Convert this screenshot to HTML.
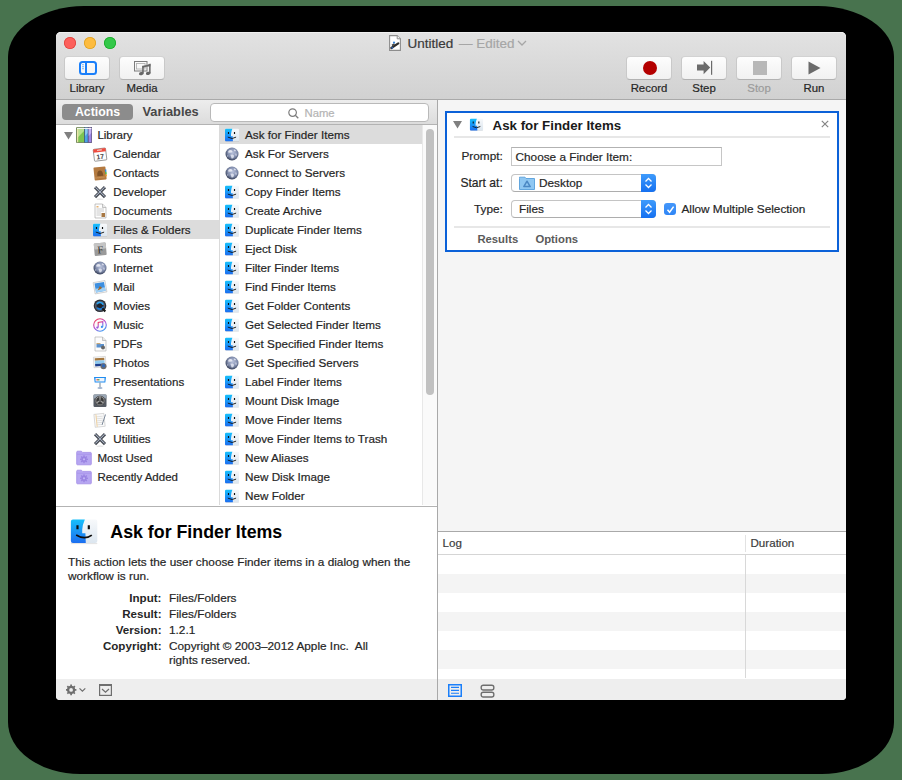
<!DOCTYPE html>
<html><head><meta charset="utf-8">
<style>
html,body{margin:0;padding:0;}
body{width:902px;height:780px;overflow:hidden;background:#48734e;position:relative;font-family:"Liberation Sans",sans-serif;color:#262626;}
.a{position:absolute;}
.t{position:absolute;white-space:pre;-webkit-text-stroke:0.2px currentColor;}
</style></head>
<body>

<svg width="0" height="0" style="position:absolute"><defs><symbol id="i-finder" viewBox="0 0 16 16"><linearGradient id="fb" x1="0" y1="0" x2="0" y2="1"><stop offset="0" stop-color="#17c0fb"/><stop offset="1" stop-color="#1c6ef0"/></linearGradient>
<linearGradient id="fw" x1="0" y1="0" x2="0" y2="1"><stop offset="0" stop-color="#f7f9fb"/><stop offset="1" stop-color="#dce6ef"/></linearGradient>
<rect x="1" y="1.8" width="14" height="12.5" rx="1.1" fill="url(#fw)"/>
<path d="M2.1 1.8H8.4Q7.2 4.4 7 7.3V9.2H8.7L8.9 14.3H2.1Q1 14.3 1 13.2V2.9Q1 1.8 2.1 1.8Z" fill="url(#fb)"/>
<path d="M4.5 4.9V7M10.5 4.9V7" stroke="#0d0d0d" stroke-width="1.15"/>
<path d="M3.8 10.1Q8.4 12.9 12.1 10.1" fill="none" stroke="#0d0d0d" stroke-width="0.9"/>
<rect x="1" y="14.3" width="14" height="0.6" fill="#000" opacity="0.1"/></symbol><symbol id="i-globe" viewBox="0 0 16 16"><radialGradient id="gl" cx="0.55" cy="0.4" r="0.62"><stop offset="0" stop-color="#b9c2dc"/><stop offset="0.6" stop-color="#7f8bab"/><stop offset="1" stop-color="#2f3850"/></radialGradient>
<circle cx="8" cy="8" r="6.5" fill="url(#gl)"/>
<path d="M4.2 5.2Q5.5 3.6 7.6 4.3L8.6 5.6L7.2 6.8L5.6 6.4L4.8 7.6Z" fill="#eef0f8" opacity="0.85"/>
<path d="M9.8 3.2L12 4.2L11.4 5.6L10 5Z" fill="#e6e9f4" opacity="0.8"/>
<path d="M6.4 8.8L8.6 8.4L10.2 9.8L9.2 12.2L7.6 12.6L7 10.6Z" fill="#e8ebf5" opacity="0.8"/>
<path d="M11 7.5L12.8 7.8L12.6 10L11.4 9.4Z" fill="#d8dcee" opacity="0.7"/>
<circle cx="3.6" cy="10" r="0.8" fill="#dfe3f0" opacity="0.6"/></symbol><symbol id="i-library" viewBox="0 0 16 16"><rect x="0.4" y="0.6" width="8.2" height="15" rx="0.4" fill="#7dc450" stroke="#56633f" stroke-width="0.7"/>
<path d="M1.2 1.2H8.1V4L1.2 11Z" fill="#b8e08e"/>
<rect x="1.1" y="1.2" width="1.1" height="14" fill="#f2e6b0"/>
<rect x="8.6" y="0.6" width="3.6" height="15" fill="#4aa3e8" stroke="#3d5670" stroke-width="0.7"/>
<path d="M9.1 1.2H11.8V6L9.1 9Z" fill="#8cc8f2"/>
<rect x="12.2" y="0.6" width="3.5" height="15" fill="#9c85e6" stroke="#4e4470" stroke-width="0.7"/>
<path d="M12.7 1.2H15.2V6L12.7 9Z" fill="#c2b2f2"/>
<rect x="1" y="0.9" width="14.4" height="1.1" fill="#fafafa" opacity="0.9"/></symbol><symbol id="i-calendar" viewBox="0 0 16 16"><g transform="rotate(-7 8 8.5)"><rect x="1.8" y="2.6" width="12.4" height="12" rx="0.8" fill="#fdfdfd" stroke="#777" stroke-width="0.7"/>
<rect x="1.8" y="2.6" width="12.4" height="3.4" fill="#ee4b3e"/><rect x="5.5" y="3.4" width="5" height="1.2" rx="0.5" fill="#f9d6d2"/>
<text x="8" y="13" font-size="6.8" font-weight="bold" font-family="Liberation Sans" text-anchor="middle" fill="#444">17</text></g></symbol><symbol id="i-contacts" viewBox="0 0 16 16"><g transform="rotate(-6 8 8)"><rect x="2" y="2" width="12" height="13" rx="0.8" fill="#b47a40"/>
<rect x="13.2" y="5" width="1.4" height="2.5" fill="#3a8de0"/><rect x="13.2" y="7.5" width="1.4" height="2.5" fill="#4bb84b"/><rect x="13.2" y="10" width="1.4" height="2" fill="#f0a030"/>
<path d="M5 11Q5 5.5 8 5.5T11 11Z" fill="#7f5228"/><path d="M3 12.5H13" stroke="#d7a46a" stroke-width="1" stroke-dasharray="1 1"/></g></symbol><symbol id="i-developer" viewBox="0 0 16 16"><path d="M3 3.2L13 13.2M13 3.2L3 13.2" stroke="#4f535b" stroke-width="3.2"/>
<path d="M3.4 3.2L12.6 12.4M12.6 3.2L3.4 12.4" stroke="#c4d0e6" stroke-width="0.9"/>
<ellipse cx="8" cy="15.2" rx="3.5" ry="0.6" fill="#000" opacity="0.12"/></symbol><symbol id="i-documents" viewBox="0 0 16 16"><path d="M3 1H10.5L14 4.5V15H3Z" fill="#fdfdfd" stroke="#a0a0a0" stroke-width="0.6"/>
<path d="M10.5 1V4.5H14" fill="#e8e8e8" stroke="#a0a0a0" stroke-width="0.6"/>
<path d="M4.5 6H12M4.5 8H12M4.5 10H9M4.5 12H9" stroke="#b5b5b5" stroke-width="0.7"/>
<rect x="9.5" y="10" width="3.5" height="4" fill="#a87843"/><rect x="4.5" y="3" width="2" height="1.5" fill="#e6b170"/></symbol><symbol id="i-fonts" viewBox="0 0 16 16"><g transform="rotate(-5 8 8)"><rect x="2.2" y="2" width="12" height="12.5" rx="1" fill="#9a9a9a"/>
<rect x="2.2" y="2" width="12" height="6" rx="1" fill="#c4c4c4"/>
<text x="8.3" y="12.3" font-size="10.5" font-family="Liberation Serif" text-anchor="middle" fill="#2e2e2e">F</text></g></symbol><symbol id="i-mail" viewBox="0 0 16 16"><g transform="rotate(-10 8 8)"><rect x="2" y="2.5" width="12" height="11.5" fill="#f4f4f4" stroke="#b0b0b0" stroke-width="0.5"/>
<rect x="3.2" y="3.7" width="9.6" height="9" fill="#3d8fe0"/><rect x="3.2" y="9" width="9.6" height="3.7" fill="#9fd0f6"/>
<path d="M5 11L8 7L10 9L8.5 10Z" fill="#a06a30"/></g></symbol><symbol id="i-movies" viewBox="0 0 16 16"><circle cx="8" cy="7.8" r="6.3" fill="#2c3038"/><circle cx="8" cy="7.8" r="5.1" fill="#515a6a"/>
<circle cx="8" cy="7.8" r="3.4" fill="#1f2530"/><path d="M5 6.2A3.4 3.4 0 0 1 11.2 6.8" fill="none" stroke="#2aa4f4" stroke-width="1.7"/><path d="M11.3 8.6A3.4 3.4 0 0 1 5.2 9.6" fill="none" stroke="#1a7fe0" stroke-width="1.7"/>
<path d="M10.3 10.3L13.3 13.6" stroke="#1a1a1a" stroke-width="2.2"/></symbol><symbol id="i-music" viewBox="0 0 16 16"><circle cx="8" cy="8" r="6.3" fill="#fbfbfb" stroke="url(#mr)" stroke-width="1.1"/>
<linearGradient id="mr" x1="0.2" y1="0" x2="0.8" y2="1"><stop offset="0" stop-color="#f43f56"/><stop offset="0.5" stop-color="#b04ad8"/><stop offset="1" stop-color="#2ea2f5"/></linearGradient>
<path d="M6.2 10.5V5.5L10.8 4.6V9.8" fill="none" stroke="url(#mr)" stroke-width="1.1"/>
<circle cx="5.3" cy="10.6" r="1.1" fill="#9c5ad8"/><circle cx="9.9" cy="9.9" r="1.1" fill="#3c8ff0"/></symbol><symbol id="i-pdfs" viewBox="0 0 16 16"><path d="M3 1H10.5L14 4.5V15H3Z" fill="#fdfdfd" stroke="#a8a8a8" stroke-width="0.6"/>
<path d="M10.5 1V4.5H14" fill="#e8e8e8" stroke="#a8a8a8" stroke-width="0.6"/>
<rect x="4.5" y="8" width="7.5" height="3.5" fill="#5b92d0"/><rect x="4.5" y="7" width="4" height="1.2" fill="#c8a878"/>
<circle cx="11" cy="11.5" r="2" fill="#666"/></symbol><symbol id="i-photos" viewBox="0 0 16 16"><g transform="rotate(-4 8 8)"><rect x="1.8" y="1.8" width="12" height="10.5" fill="#fdfdfd" stroke="#b8b8b8" stroke-width="0.5"/>
<rect x="3" y="3" width="9.6" height="2.5" fill="#a57840"/><rect x="3" y="5.5" width="9.6" height="3.2" fill="#8fcaf0"/><rect x="3" y="8.7" width="9.6" height="2.5" fill="#1d3f8e"/></g>
<circle cx="11.5" cy="11.2" r="3" fill="#6d6d6d"/><circle cx="11.5" cy="10.8" r="1.8" fill="#3169b8"/></symbol><symbol id="i-presentations" viewBox="0 0 16 16"><path d="M2 3H14L13.3 8.5H2.7Z" fill="#1f8cf0"/><rect x="3.5" y="4" width="9" height="3.5" fill="#eef4fb"/>
<rect x="4.5" y="5" width="1.5" height="1.5" fill="#f06060"/><rect x="6" y="5" width="1.5" height="1.5" fill="#60c060"/>
<rect x="7.4" y="8.5" width="1.2" height="5" fill="#8a9aaa"/><ellipse cx="8" cy="14" rx="2.6" ry="0.9" fill="#9fb4d0"/></symbol><symbol id="i-system" viewBox="0 0 16 16"><rect x="1.5" y="1.5" width="13" height="12.5" rx="1.2" fill="#555a62"/><rect x="1.5" y="1.5" width="13" height="4" rx="1" fill="#9aa6b4"/>
<circle cx="8" cy="7.8" r="5" fill="#3a3a3a"/><circle cx="8" cy="7.8" r="4.2" fill="none" stroke="#9a9a9a" stroke-width="0.9"/>
<path d="M8 7.8L8 3.8M8 7.8L4.6 9.8M8 7.8L11.4 9.8" stroke="#aaa" stroke-width="1.2"/><circle cx="8" cy="7.8" r="1.3" fill="#666"/></symbol><symbol id="i-text" viewBox="0 0 16 16"><g transform="rotate(-6 8 8)"><rect x="2.5" y="1.8" width="10" height="13" fill="#fafafa" stroke="#b8b8b8" stroke-width="0.5"/>
<path d="M4 4.5H11M4 6.5H11M4 8.5H11M4 10.5H11M4 12.5H9" stroke="#d0d0d0" stroke-width="0.6"/>
<path d="M4.5 2V14.5" stroke="#f0c070" stroke-width="0.6"/></g>
<path d="M13.5 2.5L10 13" stroke="#7d8a9a" stroke-width="1"/></symbol><symbol id="i-folder" viewBox="0 0 16 16"><path d="M0.7 2.3Q0.7 1.2 1.7 1.2H5.4L6.6 2.4H14.5Q15.3 2.4 15.3 3.3V14Q15.3 14.8 14.5 14.8H1.5Q0.7 14.8 0.7 14Z" fill="#b6a6f1" stroke="#a28ce6" stroke-width="0.8"/>
<path d="M0.9 4.3H15.1" stroke="#a892ea" stroke-width="0.7"/>
<circle cx="8" cy="9.3" r="2.7" fill="#9a84e2"/><rect x="7.3" y="5.4" width="1.4" height="1.6" fill="#9a84e2" transform="rotate(0 8 9.3)"/><rect x="7.3" y="5.4" width="1.4" height="1.6" fill="#9a84e2" transform="rotate(45 8 9.3)"/><rect x="7.3" y="5.4" width="1.4" height="1.6" fill="#9a84e2" transform="rotate(90 8 9.3)"/><rect x="7.3" y="5.4" width="1.4" height="1.6" fill="#9a84e2" transform="rotate(135 8 9.3)"/><rect x="7.3" y="5.4" width="1.4" height="1.6" fill="#9a84e2" transform="rotate(180 8 9.3)"/><rect x="7.3" y="5.4" width="1.4" height="1.6" fill="#9a84e2" transform="rotate(225 8 9.3)"/><rect x="7.3" y="5.4" width="1.4" height="1.6" fill="#9a84e2" transform="rotate(270 8 9.3)"/><rect x="7.3" y="5.4" width="1.4" height="1.6" fill="#9a84e2" transform="rotate(315 8 9.3)"/><circle cx="8" cy="9.3" r="1.1" fill="#c3b6f5"/></symbol></defs></svg>
<div class="a" style="left:8px;top:6px;width:886px;height:768px;background:#000;border-radius:76px 76px 72px 72px/51px 51px 52px 52px;"></div>
<div class="a" style="left:56px;top:32px;width:790px;height:668px;background:#fff;border-radius:5px 5px 4px 4px;"></div>
<div class="a" style="left:56px;top:32px;width:790px;height:67px;background:linear-gradient(#e2e2e2,#d1d1d1);border-radius:5px 5px 0 0;box-shadow:inset 0 1px 0 #efefef;"></div>
<div class="a" style="left:56px;top:99px;width:790px;height:1px;background:#a9a9a9;"></div>
<div class="a" style="left:64px;top:37px;width:12px;height:12px;background:#fc605c;border-radius:50%;box-shadow:inset 0 0 0 0.8px #e0443e;"></div>
<div class="a" style="left:84px;top:37px;width:12px;height:12px;background:#fdbc40;border-radius:50%;box-shadow:inset 0 0 0 0.8px #dea123;"></div>
<div class="a" style="left:104px;top:37px;width:12px;height:12px;background:#34c84a;border-radius:50%;box-shadow:inset 0 0 0 0.8px #1aab29;"></div>
<svg class="a" style="left:389px;top:35px" width="12" height="16" viewBox="0 0 12 16"><path d="M0.6 0.6H8.2L11.4 3.8V15.4H0.6Z" fill="#fff" stroke="#8d8d8d" stroke-width="1.1"/><path d="M8.2 0.6V3.8H11.4" fill="#f4f4f4" stroke="#8d8d8d" stroke-width="1"/><path d="M2.3 13L9.3 8.4" stroke="#2e2e2e" stroke-width="2.2" stroke-linecap="round"/><path d="M3 10.5L5.5 8.8" stroke="#444" stroke-width="1.6"/><circle cx="5" cy="7.6" r="1.1" fill="#3b86d8"/><circle cx="3.3" cy="12.8" r="1" fill="#2f5fae"/></svg>
<div class="t" style="font-size:13.5px;line-height:15px;top:35.5px;color:#3a3a3a;left:407.4px;">Untitled</div>
<div class="t" style="font-size:13.5px;line-height:15px;top:35.5px;color:#a6a6a6;left:459px;">— Edited</div>
<svg class="a" style="left:517px;top:40px" width="10" height="6" viewBox="0 0 10 6"><path d="M1 1L5 5L9 1" fill="none" stroke="#a6a6a6" stroke-width="1.3"/></svg>
<div class="a" style="left:64px;top:56px;width:46px;height:24px;box-sizing:border-box;background:linear-gradient(#fdfdfd,#f1f1f1);border:1px solid #c9c9c9;border-top-color:#d2d2d2;border-bottom-color:#b2b2b2;border-radius:4px;"></div>
<div class="t" style="font-size:11.4px;line-height:12px;top:82px;left:-113px;width:400px;text-align:center;">Library</div>
<div class="a" style="left:119px;top:56px;width:46px;height:24px;box-sizing:border-box;background:linear-gradient(#fdfdfd,#f1f1f1);border:1px solid #c9c9c9;border-top-color:#d2d2d2;border-bottom-color:#b2b2b2;border-radius:4px;"></div>
<div class="t" style="font-size:11.4px;line-height:12px;top:82px;left:-58px;width:400px;text-align:center;">Media</div>
<div class="a" style="left:626px;top:56px;width:46px;height:24px;box-sizing:border-box;background:linear-gradient(#fdfdfd,#f1f1f1);border:1px solid #c9c9c9;border-top-color:#d2d2d2;border-bottom-color:#b2b2b2;border-radius:4px;"></div>
<div class="t" style="font-size:11.4px;line-height:12px;top:82px;left:449px;width:400px;text-align:center;">Record</div>
<div class="a" style="left:681px;top:56px;width:46px;height:24px;box-sizing:border-box;background:linear-gradient(#fdfdfd,#f1f1f1);border:1px solid #c9c9c9;border-top-color:#d2d2d2;border-bottom-color:#b2b2b2;border-radius:4px;"></div>
<div class="t" style="font-size:11.4px;line-height:12px;top:82px;left:504px;width:400px;text-align:center;">Step</div>
<div class="a" style="left:736px;top:56px;width:46px;height:24px;box-sizing:border-box;background:linear-gradient(#fdfdfd,#f1f1f1);border:1px solid #c9c9c9;border-top-color:#d2d2d2;border-bottom-color:#b2b2b2;border-radius:4px;"></div>
<div class="t" style="font-size:11.4px;line-height:12px;top:82px;color:#9b9b9b;left:559px;width:400px;text-align:center;">Stop</div>
<div class="a" style="left:791px;top:56px;width:46px;height:24px;box-sizing:border-box;background:linear-gradient(#fdfdfd,#f1f1f1);border:1px solid #c9c9c9;border-top-color:#d2d2d2;border-bottom-color:#b2b2b2;border-radius:4px;"></div>
<div class="t" style="font-size:11.4px;line-height:12px;top:82px;left:614px;width:400px;text-align:center;">Run</div>
<svg class="a" style="left:79px;top:61px" width="18" height="14" viewBox="0 0 18 14"><rect x="1" y="1" width="16" height="12" rx="2.5" fill="none" stroke="#1a7ffa" stroke-width="2"/><rect x="6" y="1" width="2" height="12" fill="#1a7ffa"/><rect x="3" y="3.2" width="2" height="1" fill="#7ab8fb"/><rect x="3" y="5.2" width="2" height="1" fill="#7ab8fb"/><rect x="3" y="7.2" width="2" height="1" fill="#7ab8fb"/></svg>
<svg class="a" style="left:134px;top:61px" width="18" height="16" viewBox="0 0 18 16"><rect x="0.5" y="0.5" width="12.5" height="9.5" fill="none" stroke="#7d7d7d"/><rect x="2.5" y="2.5" width="8.5" height="5.5" fill="none" stroke="#b3b3b3" stroke-width="0.9"/><path d="M8.2 4.8L16.6 2.6V5.2L8.2 7.2Z" fill="#666" stroke="#f4f4f4" stroke-width="0.4"/><rect x="8.2" y="5" width="1.5" height="7.5" fill="#666"/><rect x="15.1" y="3" width="1.5" height="9.3" fill="#666"/><ellipse cx="7.3" cy="12.6" rx="2.4" ry="1.6" transform="rotate(-15 7.3 12.6)" fill="#666"/><ellipse cx="14.2" cy="12.4" rx="2.4" ry="1.6" transform="rotate(-15 14.2 12.4)" fill="#666"/></svg>
<div class="a" style="left:643px;top:61px;width:14px;height:14px;background:#b40000;border-radius:50%;"></div>
<svg class="a" style="left:696px;top:60px" width="17" height="16" viewBox="0 0 17 16"><path d="M1 4.6H7.6V1L14.2 7.6L7.6 14.2V10.6H1Z" fill="#6b6b6b"/><rect x="15" y="0.8" width="1.2" height="14" fill="#6b6b6b"/></svg>
<div class="a" style="left:752.5px;top:61px;width:14px;height:14px;background:#b8b8b8;"></div>
<svg class="a" style="left:808px;top:61px" width="13" height="14" viewBox="0 0 13 14"><path d="M0.5 0.5L12.5 7L0.5 13.5Z" fill="#6b6b6b"/></svg>
<div class="a" style="left:56px;top:100px;width:381px;height:24px;background:linear-gradient(#ededed,#dcdcdc);"></div>
<div class="a" style="left:56px;top:124px;width:381px;height:1px;background:#b3b3b3;"></div>
<div class="a" style="left:62px;top:104px;width:71px;height:16px;background:#8c8c8c;border-radius:4px;"></div>
<div class="t" style="font-size:12.3px;line-height:14px;top:105px;font-weight:bold;-webkit-text-stroke:0;color:#ffffff;left:-102.5px;width:400px;text-align:center;">Actions</div>
<div class="t" style="font-size:12.8px;line-height:15px;top:104px;font-weight:bold;-webkit-text-stroke:0;color:#474747;left:142.5px;">Variables</div>
<div class="a" style="left:210px;top:103px;width:219px;height:19px;box-sizing:border-box;background:#fff;border:1px solid #b9b9b9;border-radius:4px;"></div>
<svg class="a" style="left:288px;top:108px" width="11" height="11" viewBox="0 0 11 11"><circle cx="4.6" cy="4.6" r="3.8" fill="none" stroke="#7d7d7d" stroke-width="1.2"/><path d="M7.3 7.3L10.3 10.3" stroke="#7d7d7d" stroke-width="1.3"/></svg>
<div class="t" style="font-size:11.3px;line-height:12px;top:107px;color:#b4b4b4;left:304.5px;">Name</div>
<div class="a" style="left:437px;top:100px;width:1px;height:600px;background:#a9a9a9;"></div>
<div class="a" style="left:219px;top:125px;width:1px;height:380px;background:#dadada;"></div>
<div class="a" style="left:56px;top:220px;width:163px;height:19px;background:#dcdcdc;"></div>
<div class="a" style="left:220px;top:125px;width:202px;height:19px;background:#dcdcdc;"></div>
<div class="t" style="font-size:11.5px;line-height:12px;top:129px;left:97.4px;">Library</div>
<div class="t" style="font-size:11.6px;line-height:13px;top:147px;left:113.3px;">Calendar</div>
<div class="t" style="font-size:11.6px;line-height:13px;top:166px;left:113.3px;">Contacts</div>
<div class="t" style="font-size:11.6px;line-height:13px;top:185px;left:113.3px;">Developer</div>
<div class="t" style="font-size:11.6px;line-height:13px;top:204px;left:113.3px;">Documents</div>
<div class="t" style="font-size:11.6px;line-height:13px;top:223px;left:113.3px;">Files &amp; Folders</div>
<div class="t" style="font-size:11.6px;line-height:13px;top:242px;left:113.3px;">Fonts</div>
<div class="t" style="font-size:11.6px;line-height:13px;top:261px;left:113.3px;">Internet</div>
<div class="t" style="font-size:11.6px;line-height:13px;top:280px;left:113.3px;">Mail</div>
<div class="t" style="font-size:11.6px;line-height:13px;top:299px;left:113.3px;">Movies</div>
<div class="t" style="font-size:11.6px;line-height:13px;top:318px;left:113.3px;">Music</div>
<div class="t" style="font-size:11.6px;line-height:13px;top:337px;left:113.3px;">PDFs</div>
<div class="t" style="font-size:11.6px;line-height:13px;top:356px;left:113.3px;">Photos</div>
<div class="t" style="font-size:11.6px;line-height:13px;top:375px;left:113.3px;">Presentations</div>
<div class="t" style="font-size:11.6px;line-height:13px;top:394px;left:113.3px;">System</div>
<div class="t" style="font-size:11.6px;line-height:13px;top:413px;left:113.3px;">Text</div>
<div class="t" style="font-size:11.6px;line-height:13px;top:432px;left:113.3px;">Utilities</div>
<div class="t" style="font-size:11.5px;line-height:12px;top:452px;left:97.4px;">Most Used</div>
<div class="t" style="font-size:11.5px;line-height:12px;top:471px;left:97.4px;">Recently Added</div>
<svg class="a" style="left:76px;top:126.5px" width="16" height="16"><use href="#i-library"/></svg>
<svg class="a" style="left:92px;top:145.5px" width="16" height="16"><use href="#i-calendar"/></svg>
<svg class="a" style="left:92px;top:164.5px" width="16" height="16"><use href="#i-contacts"/></svg>
<svg class="a" style="left:92px;top:183.5px" width="16" height="16"><use href="#i-developer"/></svg>
<svg class="a" style="left:92px;top:202.5px" width="16" height="16"><use href="#i-documents"/></svg>
<svg class="a" style="left:92px;top:221.5px" width="16" height="16"><use href="#i-finder"/></svg>
<svg class="a" style="left:92px;top:240.5px" width="16" height="16"><use href="#i-fonts"/></svg>
<svg class="a" style="left:92px;top:259.5px" width="16" height="16"><use href="#i-globe"/></svg>
<svg class="a" style="left:92px;top:278.5px" width="16" height="16"><use href="#i-mail"/></svg>
<svg class="a" style="left:92px;top:297.5px" width="16" height="16"><use href="#i-movies"/></svg>
<svg class="a" style="left:92px;top:316.5px" width="16" height="16"><use href="#i-music"/></svg>
<svg class="a" style="left:92px;top:335.5px" width="16" height="16"><use href="#i-pdfs"/></svg>
<svg class="a" style="left:92px;top:354.5px" width="16" height="16"><use href="#i-photos"/></svg>
<svg class="a" style="left:92px;top:373.5px" width="16" height="16"><use href="#i-presentations"/></svg>
<svg class="a" style="left:92px;top:392.5px" width="16" height="16"><use href="#i-system"/></svg>
<svg class="a" style="left:92px;top:411.5px" width="16" height="16"><use href="#i-text"/></svg>
<svg class="a" style="left:92px;top:430.5px" width="16" height="16"><use href="#i-developer"/></svg>
<svg class="a" style="left:76px;top:449.5px" width="16" height="16"><use href="#i-folder"/></svg>
<svg class="a" style="left:76px;top:468.5px" width="16" height="16"><use href="#i-folder"/></svg>
<svg class="a" style="left:64px;top:132px" width="9" height="8" viewBox="0 0 9 8"><path d="M0 0H9L4.5 7.5Z" fill="#808080"/></svg>
<div class="t" style="font-size:11.7px;line-height:13px;top:128px;left:245px;">Ask for Finder Items</div>
<div class="t" style="font-size:11.7px;line-height:13px;top:147px;left:245px;">Ask For Servers</div>
<div class="t" style="font-size:11.7px;line-height:13px;top:166px;left:245px;">Connect to Servers</div>
<div class="t" style="font-size:11.7px;line-height:13px;top:185px;left:245px;">Copy Finder Items</div>
<div class="t" style="font-size:11.7px;line-height:13px;top:204px;left:245px;">Create Archive</div>
<div class="t" style="font-size:11.7px;line-height:13px;top:223px;left:245px;">Duplicate Finder Items</div>
<div class="t" style="font-size:11.7px;line-height:13px;top:242px;left:245px;">Eject Disk</div>
<div class="t" style="font-size:11.7px;line-height:13px;top:261px;left:245px;">Filter Finder Items</div>
<div class="t" style="font-size:11.7px;line-height:13px;top:280px;left:245px;">Find Finder Items</div>
<div class="t" style="font-size:11.7px;line-height:13px;top:299px;left:245px;">Get Folder Contents</div>
<div class="t" style="font-size:11.7px;line-height:13px;top:318px;left:245px;">Get Selected Finder Items</div>
<div class="t" style="font-size:11.7px;line-height:13px;top:337px;left:245px;">Get Specified Finder Items</div>
<div class="t" style="font-size:11.7px;line-height:13px;top:356px;left:245px;">Get Specified Servers</div>
<div class="t" style="font-size:11.7px;line-height:13px;top:375px;left:245px;">Label Finder Items</div>
<div class="t" style="font-size:11.7px;line-height:13px;top:394px;left:245px;">Mount Disk Image</div>
<div class="t" style="font-size:11.7px;line-height:13px;top:413px;left:245px;">Move Finder Items</div>
<div class="t" style="font-size:11.7px;line-height:13px;top:432px;left:245px;">Move Finder Items to Trash</div>
<div class="t" style="font-size:11.7px;line-height:13px;top:451px;left:245px;">New Aliases</div>
<div class="t" style="font-size:11.7px;line-height:13px;top:470px;left:245px;">New Disk Image</div>
<div class="t" style="font-size:11.7px;line-height:13px;top:489px;left:245px;">New Folder</div>
<svg class="a" style="left:224px;top:127px" width="16" height="16"><use href="#i-finder"/></svg>
<svg class="a" style="left:224px;top:146px" width="16" height="16"><use href="#i-globe"/></svg>
<svg class="a" style="left:224px;top:165px" width="16" height="16"><use href="#i-globe"/></svg>
<svg class="a" style="left:224px;top:184px" width="16" height="16"><use href="#i-finder"/></svg>
<svg class="a" style="left:224px;top:203px" width="16" height="16"><use href="#i-finder"/></svg>
<svg class="a" style="left:224px;top:222px" width="16" height="16"><use href="#i-finder"/></svg>
<svg class="a" style="left:224px;top:241px" width="16" height="16"><use href="#i-finder"/></svg>
<svg class="a" style="left:224px;top:260px" width="16" height="16"><use href="#i-finder"/></svg>
<svg class="a" style="left:224px;top:279px" width="16" height="16"><use href="#i-finder"/></svg>
<svg class="a" style="left:224px;top:298px" width="16" height="16"><use href="#i-finder"/></svg>
<svg class="a" style="left:224px;top:317px" width="16" height="16"><use href="#i-finder"/></svg>
<svg class="a" style="left:224px;top:336px" width="16" height="16"><use href="#i-finder"/></svg>
<svg class="a" style="left:224px;top:355px" width="16" height="16"><use href="#i-globe"/></svg>
<svg class="a" style="left:224px;top:374px" width="16" height="16"><use href="#i-finder"/></svg>
<svg class="a" style="left:224px;top:393px" width="16" height="16"><use href="#i-finder"/></svg>
<svg class="a" style="left:224px;top:412px" width="16" height="16"><use href="#i-finder"/></svg>
<svg class="a" style="left:224px;top:431px" width="16" height="16"><use href="#i-finder"/></svg>
<svg class="a" style="left:224px;top:450px" width="16" height="16"><use href="#i-finder"/></svg>
<svg class="a" style="left:224px;top:469px" width="16" height="16"><use href="#i-finder"/></svg>
<svg class="a" style="left:224px;top:488px" width="16" height="16"><use href="#i-finder"/></svg>
<div class="a" style="left:422px;top:125px;width:15px;height:380px;background:#fafafa;border-left:1px solid #e8e8e8;box-sizing:border-box;"></div>
<div class="a" style="left:425.5px;top:128.5px;width:8.5px;height:266px;background:#c1c1c1;border-radius:4.5px;"></div>
<div class="a" style="left:56px;top:506px;width:381px;height:1px;background:#b3b3b3;"></div>
<svg class="a" style="left:69px;top:515.8px" width="30.2" height="30.2"><use href="#i-finder"/></svg>
<div class="t" style="font-size:17.8px;line-height:20px;top:522px;font-weight:bold;-webkit-text-stroke:0;color:#000000;left:110.3px;">Ask for Finder Items</div>
<div class="t" style="font-size:11.8px;line-height:14px;top:555px;left:68px;">This action lets the user choose Finder items in a dialog when the</div>
<div class="t" style="font-size:11.8px;line-height:14px;top:569px;left:68px;">workflow is run.</div>
<div class="t" style="font-size:11.6px;line-height:13px;top:591px;font-weight:bold;-webkit-text-stroke:0;left:-238.5px;width:400px;text-align:right;">Input:</div>
<div class="t" style="font-size:11.8px;line-height:14px;top:591px;left:169px;">Files/Folders</div>
<div class="t" style="font-size:11.6px;line-height:13px;top:607px;font-weight:bold;-webkit-text-stroke:0;left:-238.5px;width:400px;text-align:right;">Result:</div>
<div class="t" style="font-size:11.8px;line-height:14px;top:607px;left:169px;">Files/Folders</div>
<div class="t" style="font-size:11.6px;line-height:13px;top:623px;font-weight:bold;-webkit-text-stroke:0;left:-238.5px;width:400px;text-align:right;">Version:</div>
<div class="t" style="font-size:11.8px;line-height:14px;top:623px;left:169px;">1.2.1</div>
<div class="t" style="font-size:11.6px;line-height:13px;top:639px;font-weight:bold;-webkit-text-stroke:0;left:-238.5px;width:400px;text-align:right;">Copyright:</div>
<div class="t" style="font-size:11.8px;line-height:14px;top:639px;left:169px;">Copyright © 2003–2012 Apple Inc.  All</div>
<div class="t" style="font-size:11.8px;line-height:14px;top:653px;left:169px;">rights reserved.</div>
<div class="a" style="left:56px;top:679px;width:381px;height:21px;background:#eeeeee;border-radius:0 0 0 4px;"></div>
<div class="a" style="left:438px;top:100px;width:408px;height:431px;background:#f5f5f5;"></div>
<div class="a" style="left:445px;top:111px;width:394px;height:141px;box-sizing:border-box;background:#fff;border:2px solid #0b61d8;"></div>
<svg class="a" style="left:453px;top:121px" width="9" height="8" viewBox="0 0 9 8"><path d="M0 0H9L4.5 7.5Z" fill="#808080"/></svg>
<svg class="a" style="left:469px;top:116.5px" width="15" height="15"><use href="#i-finder"/></svg>
<div class="t" style="font-size:13.3px;line-height:15px;top:118px;font-weight:bold;-webkit-text-stroke:0;color:#1a1a1a;left:492.6px;">Ask for Finder Items</div>
<svg class="a" style="left:821px;top:120px" width="8" height="8" viewBox="0 0 8 8"><path d="M0.8 0.8L7.2 7.2M7.2 0.8L0.8 7.2" stroke="#858585" stroke-width="1.2"/></svg>
<div class="a" style="left:454px;top:136px;width:376px;height:2px;background:#e7e7e7;"></div>
<div class="t" style="font-size:11.8px;line-height:14px;top:149px;left:102.80000000000001px;width:400px;text-align:right;">Prompt:</div>
<div class="a" style="left:511px;top:147px;width:211px;height:19px;box-sizing:border-box;border:1px solid #c6c6c6;border-top-color:#b2b2b2;background:#fff;"></div>
<div class="t" style="font-size:11.8px;line-height:14px;top:150px;left:515.5px;">Choose a Finder Item:</div>
<div class="t" style="font-size:12.1px;line-height:14px;top:176px;left:102.80000000000001px;width:400px;text-align:right;">Start at:</div>
<div class="t" style="font-size:11.8px;line-height:14px;top:202px;left:102.80000000000001px;width:400px;text-align:right;">Type:</div>
<div class="a" style="left:511px;top:174px;width:145px;height:18px;box-sizing:border-box;background:#fff;border:1px solid #c4c4c4;border-bottom-color:#adadad;border-radius:4px;"></div>
<div class="a" style="left:641px;top:174px;width:15px;height:18px;background:linear-gradient(#3e9bfc,#1570f0);border-radius:0 4px 4px 0;"></div>
<svg class="a" style="left:644px;top:177px" width="9" height="12" viewBox="0 0 9 12"><path d="M1.5 4.5L4.5 1.5L7.5 4.5M1.5 7.5L4.5 10.5L7.5 7.5" fill="none" stroke="#fff" stroke-width="1.3"/></svg>
<div class="a" style="left:511px;top:200px;width:145px;height:18px;box-sizing:border-box;background:#fff;border:1px solid #c4c4c4;border-bottom-color:#adadad;border-radius:4px;"></div>
<div class="a" style="left:641px;top:200px;width:15px;height:18px;background:linear-gradient(#3e9bfc,#1570f0);border-radius:0 4px 4px 0;"></div>
<svg class="a" style="left:644px;top:203px" width="9" height="12" viewBox="0 0 9 12"><path d="M1.5 4.5L4.5 1.5L7.5 4.5M1.5 7.5L4.5 10.5L7.5 7.5" fill="none" stroke="#fff" stroke-width="1.3"/></svg>
<div class="t" style="font-size:11.8px;line-height:14px;top:176px;left:539px;">Desktop</div>
<div class="t" style="font-size:11.8px;line-height:14px;top:202px;left:519px;">Files</div>
<svg class="a" style="left:519px;top:176px" width="16" height="14" viewBox="0 0 16 14"><path d="M0.5 2.5V1.2H6L7 2.5H15.5V13.5H0.5Z" fill="#8fc7f2" stroke="#62a6de"/><path d="M8 5.2L11.2 10.6H4.8Z" fill="none" stroke="#4b88c4" stroke-width="1.5" stroke-linejoin="round"/></svg>
<div class="a" style="left:664px;top:203px;width:12px;height:12px;background:linear-gradient(#4497fa,#2f86f6);border-radius:3px;"></div>
<svg class="a" style="left:665.5px;top:204.5px" width="9" height="9" viewBox="0 0 9 9"><path d="M1.5 4.8L3.6 7.2L7.6 1.6" fill="none" stroke="#fff" stroke-width="1.5"/></svg>
<div class="t" style="font-size:11.8px;line-height:14px;top:202px;left:681.4px;">Allow Multiple Selection</div>
<div class="a" style="left:454px;top:226px;width:376px;height:2px;background:#e7e7e7;"></div>
<div class="t" style="font-size:11.3px;line-height:12px;top:233px;font-weight:bold;-webkit-text-stroke:0;color:#5a5a5a;left:477.4px;">Results</div>
<div class="t" style="font-size:11.3px;line-height:12px;top:233px;font-weight:bold;-webkit-text-stroke:0;color:#5a5a5a;left:535.4px;">Options</div>
<div class="a" style="left:438px;top:531px;width:408px;height:1px;background:#a9a9a9;"></div>
<div class="a" style="left:438px;top:532px;width:408px;height:22px;background:#fff;"></div>
<div class="a" style="left:438px;top:554px;width:408px;height:1px;background:#d5d5d5;"></div>
<div class="t" style="font-size:11.6px;line-height:13px;top:536px;color:#3c3c3c;left:442.5px;">Log</div>
<div class="t" style="font-size:11.6px;line-height:13px;top:536px;color:#3c3c3c;left:750.5px;">Duration</div>
<div class="a" style="left:745px;top:535px;width:1px;height:17px;background:#e2e2e2;"></div>
<div class="a" style="left:438px;top:555px;width:408px;height:19px;background:#ffffff;"></div>
<div class="a" style="left:438px;top:574px;width:408px;height:19px;background:#f4f4f4;"></div>
<div class="a" style="left:438px;top:593px;width:408px;height:19px;background:#ffffff;"></div>
<div class="a" style="left:438px;top:612px;width:408px;height:19px;background:#f4f4f4;"></div>
<div class="a" style="left:438px;top:631px;width:408px;height:19px;background:#ffffff;"></div>
<div class="a" style="left:438px;top:650px;width:408px;height:19px;background:#f4f4f4;"></div>
<div class="a" style="left:438px;top:669px;width:408px;height:9px;background:#ffffff;"></div>
<div class="a" style="left:745px;top:555px;width:1px;height:123px;background:#d8d8d8;"></div>
<div class="a" style="left:438px;top:679px;width:408px;height:21px;background:#eeeeee;border-radius:0 0 4px 0;"></div>
<svg class="a" style="left:448px;top:684px" width="14" height="13" viewBox="0 0 14 13"><rect x="0.75" y="0.75" width="12.5" height="11.5" fill="none" stroke="#1a7ffa" stroke-width="1.5"/><path d="M3 3.4H11M3 6.4H11M3 9.3H11" stroke="#1a7ffa" stroke-width="1.1"/></svg>
<svg class="a" style="left:479.5px;top:683.5px" width="15" height="14" viewBox="0 0 15 14"><rect x="1.2" y="1.2" width="12.6" height="4.8" rx="2" fill="none" stroke="#6e6e6e" stroke-width="1.4"/><rect x="1.2" y="8.2" width="12.6" height="4.8" rx="2" fill="none" stroke="#6e6e6e" stroke-width="1.4"/></svg>
<svg class="a" style="left:66px;top:684px" width="21" height="12" viewBox="0 0 21 12"><circle cx="5.1" cy="5.9" r="3" fill="none" stroke="#6e6e6e" stroke-width="2.3"/><path d="M5.1 0.6V2.6M5.1 9.2V11.2M-0.2 5.9H1.8M8.4 5.9H10.4M1.35 2.15L2.75 3.55M7.45 8.25L8.85 9.65M1.35 9.65L2.75 8.25M7.45 3.55L8.85 2.15" stroke="#6e6e6e" stroke-width="1.7"/><path d="M13.5 4.3L16.4 7.2L19.3 4.3" fill="none" stroke="#6e6e6e" stroke-width="1.2"/></svg>
<svg class="a" style="left:99px;top:684px" width="13" height="12" viewBox="0 0 13 12"><rect x="0.6" y="0.6" width="11.8" height="10.8" fill="none" stroke="#6e6e6e" stroke-width="1.2"/><rect x="0" y="0" width="13" height="2" fill="#6e6e6e"/><path d="M3 5L6.5 8.2L10 5" fill="none" stroke="#6e6e6e" stroke-width="1.2"/></svg>
</body></html>
